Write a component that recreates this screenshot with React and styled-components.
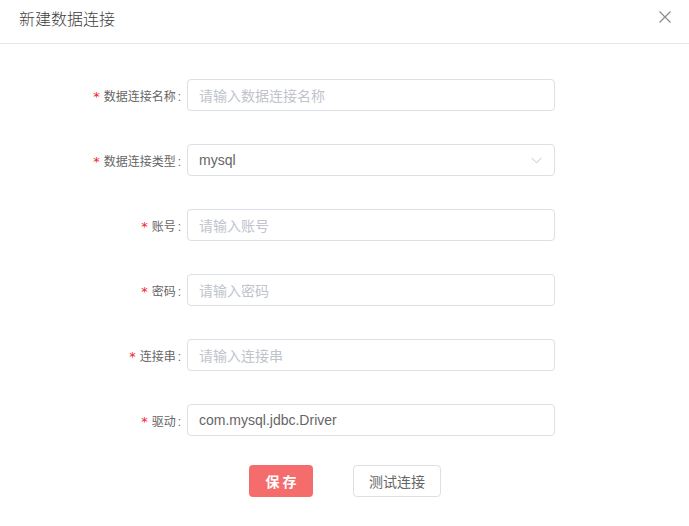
import React from "react";
import styled, { createGlobalStyle } from "styled-components";

const GlobalStyle = createGlobalStyle`
  body {
    margin: 0;
    background: #fff;
    font-family: "Noto Sans CJK SC", "Noto Sans", sans-serif;
  }
`;

const fields = [
  { label: "数据连接名称", placeholder: "请输入数据连接名称" },
  { label: "数据连接类型", value: "mysql", select: true },
  { label: "账号", placeholder: "请输入账号" },
  { label: "密码", placeholder: "请输入密码" },
  { label: "连接串", placeholder: "请输入连接串" },
  { label: "驱动", value: "com.mysql.jdbc.Driver" },
];

function Chevron() {
  return (
    <svg width="11" height="7" viewBox="0 0 11 7" fill="none">
      <path d="M0.5 0.8 L5.5 5.8 L10.5 0.8" stroke="#c0c4cc" strokeWidth="1" />
    </svg>
  );
}

function CloseIcon() {
  return (
    <svg width="12" height="12" viewBox="0 0 12 12" fill="none">
      <path d="M0.5 0.5 L11.5 11.5 M11.5 0.5 L0.5 11.5" stroke="#8c8c8c" strokeWidth="1.2" />
    </svg>
  );
}

function App() {
  return (
    <Dialog>
      <GlobalStyle />
      <Header>
        <Title>新建数据连接</Title>
        <CloseButton>
          <CloseIcon />
        </CloseButton>
      </Header>
      <Form>
        {fields.map((f) => (
          <FormItem key={f.label}>
            <Label>
              <Star>*</Star>
              {f.label}
              <Colon>:</Colon>
            </Label>
            <InputBox>
              <InputText $placeholder={!f.value}>{f.value || f.placeholder}</InputText>
              {f.select && <Chevron />}
            </InputBox>
          </FormItem>
        ))}
        <Actions>
          <SaveButton>保 存</SaveButton>
          <PlainButton>测试连接</PlainButton>
        </Actions>
      </Form>
    </Dialog>
  );
}

const Dialog = styled.div`
  width: 689px;
  height: 526px;
  background: #fff;
`;

const Header = styled.div`
  height: 44px;
  padding: 6px 15px 0 19px;
  box-sizing: border-box;
  border-bottom: 1px solid #e8e8e8;
  display: flex;
  justify-content: space-between;
  align-items: flex-start;
`;

const Title = styled.div`
  font-size: 16px;
  line-height: 24px;
  color: #404040;
  font-weight: 300;
`;

const CloseButton = styled.div`
  width: 18px;
  height: 18px;
  margin-top: 2px;
  display: flex;
  align-items: center;
  justify-content: center;
`;

const Form = styled.div`
  padding-top: 35px;
  display: flex;
  flex-direction: column;
  gap: 33px;
`;

const FormItem = styled.div`
  display: flex;
  align-items: center;
`;

const Label = styled.div`
  width: 187px;
  box-sizing: border-box;
  padding-right: 6px;
  text-align: right;
  font-size: 12px;
  color: #666;
  white-space: nowrap;
`;

const Star = styled.span`
  color: #f5222d;
  margin-right: 4px;
  font-family: "DejaVu Sans", sans-serif;
  font-size: 13px;
`;

const Colon = styled.span`
  margin-left: 2px;
  font-family: "Liberation Sans", sans-serif;
`;

const InputBox = styled.div`
  width: 368px;
  height: 32px;
  box-sizing: border-box;
  border: 1px solid #dcdfe6;
  border-radius: 4px;
  padding: 0 12px 0 11px;
  display: flex;
  align-items: center;
  justify-content: space-between;
`;

const InputText = styled.span`
  font-family: "Liberation Sans", "Noto Sans CJK SC", sans-serif;
  font-size: 14px;
  color: ${(p) => (p.$placeholder ? "#c0c4cc" : "#666")};
`;

const Actions = styled.div`
  margin-top: -4px;
  display: flex;
  justify-content: center;
  gap: 40px;
  padding-left: 1px;
`;

const SaveButton = styled.div`
  width: 64px;
  height: 32px;
  border-radius: 4px;
  background: #f56c6c;
  color: #fff;
  font-size: 14px;
  font-weight: 700;
  display: flex;
  align-items: center;
  justify-content: center;
  white-space: pre;
`;

const PlainButton = styled.div`
  width: 88px;
  height: 32px;
  box-sizing: border-box;
  border: 1px solid #dcdfe6;
  border-radius: 4px;
  background: #fff;
  color: #666;
  font-size: 14px;
  display: flex;
  align-items: center;
  justify-content: center;
`;

export default App;
